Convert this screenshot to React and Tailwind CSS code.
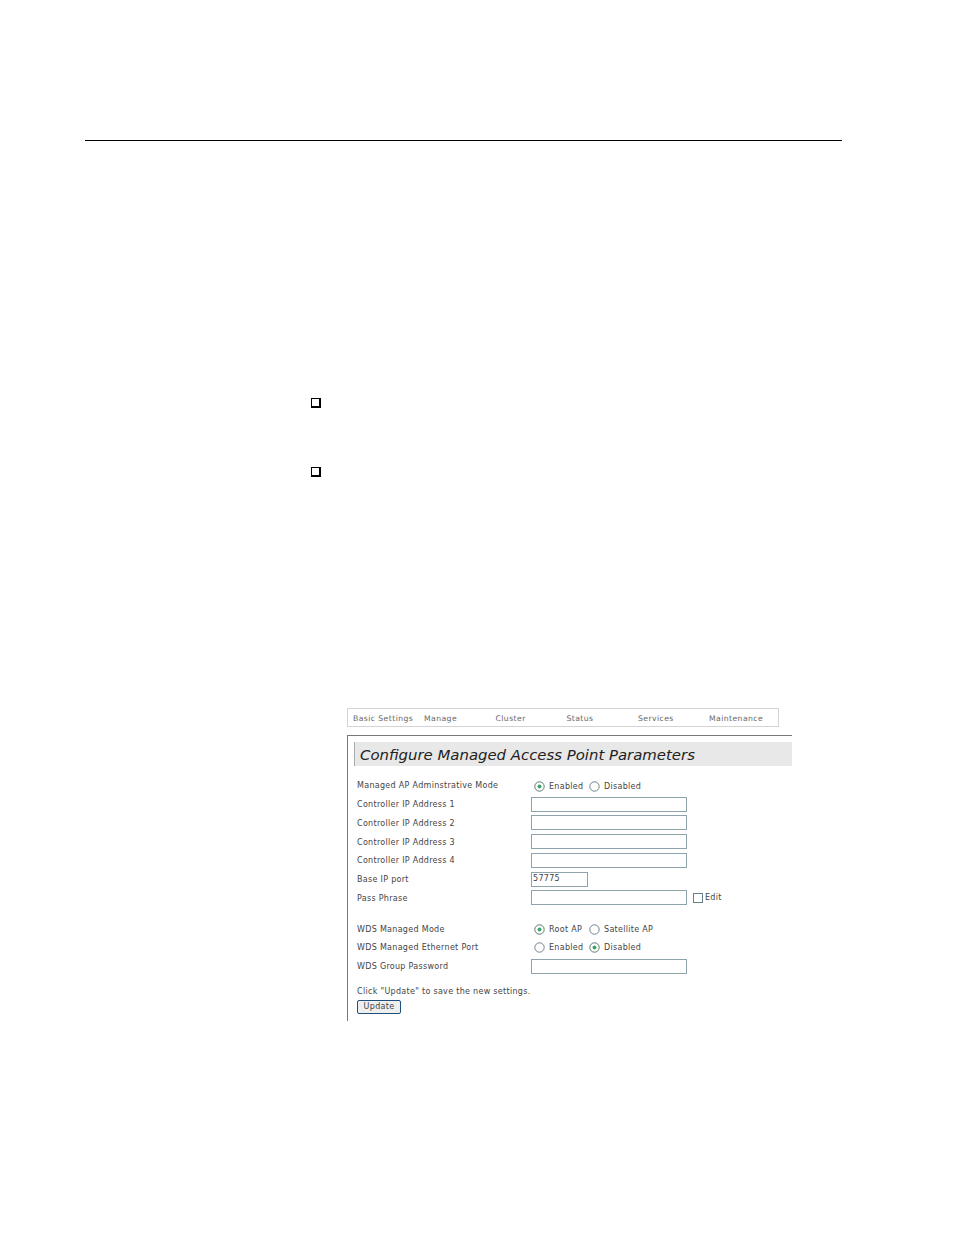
const Field = ({ w = "w-[156px]", value = "" }) => (
  <div className={`${w} h-[15px] border border-[#8fa3ad] bg-white text-[8px] leading-[12px] pl-[1px] text-[#444] tracking-[0.3px]`}>{value}</div>
);

const Radio = ({ on }) => (
  <svg width="11" height="11" viewBox="0 0 11 11" className="shrink-0">
    <circle cx="5.5" cy="5.5" r="4.7" fill="#fff" stroke={on ? "#4d6b63" : "#5d7480"} strokeWidth="0.9" />
    {on && <circle cx="5.5" cy="5.5" r="2" fill="#3fa56a" />}
  </svg>
);

const Options = ({ a, b, aOn, pt = "pt-[1px]" }) => (
  <div className={`flex items-center pl-[3px] ${pt} text-[#444]`}>
    <Radio on={aOn} />
    <span className="ml-[4px] pt-[1px] w-[40px] whitespace-nowrap">{a}</span>
    <Radio on={!aOn} />
    <span className="ml-[4px] pt-[1px] whitespace-nowrap">{b}</span>
  </div>
);

const Row = ({ label, children }) => (
  <div className="flex items-center h-[18.75px]">
    <div className="w-[174px] shrink-0 text-[#444] pt-[2px]">{label}</div>
    {children}
  </div>
);

const tabs = [
  ["Basic Settings", "w-[71px]"],
  ["Manage", "w-[71.5px]"],
  ["Cluster", "w-[71px]"],
  ["Status", "w-[71.5px]"],
  ["Services", "w-[71px]"],
  ["Maintenance", "w-[70px]"],
];

const Bullet = ({ className = "" }) => (
  <div className={`w-[10px] h-[10px] border border-r-[2px] border-b-[2px] border-black bg-white ${className}`} />
);

export default function App() {
  return (
    <div className="w-[954px] h-[1235px] bg-white overflow-hidden pt-[140px] font-['DejaVu_Sans',sans-serif]">
      <div className="ml-[85px] w-[757px] h-px bg-black" />
      <div className="ml-[311px] pt-[257px]">
        <Bullet />
        <Bullet className="mt-[59px]" />
      </div>

      <div className="ml-[347px] mt-[231px] w-[445px] text-[8px] tracking-[0.3px]">
        <div className="w-[432px] h-[19px] border border-[#d4d4d4] flex items-center pl-[5px] pt-[3px] text-[7.7px] tracking-[0.42px] text-[#666]">
          {tabs.map(([t, w]) => (
            <div key={t} className={`${w} shrink-0 whitespace-nowrap`}>{t}</div>
          ))}
        </div>

        <div className="mt-[8px] h-[286px] border-t border-l border-[#777] pt-[6px] pl-[6px]">
          <div className="h-[24px] bg-[#e8e8e8] border-l border-[#aaa] pl-[5px] pt-[3px] flex items-center text-[14.9px] tracking-normal italic text-[#222]">
            Configure Managed Access Point Parameters
          </div>

          <div className="pl-[3px] mt-[10px]">
            <Row label="Managed AP Adminstrative Mode">
              <Options a="Enabled" b="Disabled" aOn pt="pt-[3px]" />
            </Row>
            <Row label="Controller IP Address 1"><Field /></Row>
            <Row label="Controller IP Address 2"><Field /></Row>
            <Row label="Controller IP Address 3"><Field /></Row>
            <Row label="Controller IP Address 4"><Field /></Row>
            <Row label="Base IP port"><Field w="w-[57px]" value="57775" /></Row>
            <Row label="Pass Phrase">
              <Field />
              <div className="ml-[6px] w-[10px] h-[10px] border border-[#6b7f8a] bg-white" />
              <span className="ml-[2px] text-[#444]">Edit</span>
            </Row>
            <div className="h-[12px]" />
            <Row label="WDS Managed Mode"><Options a="Root AP" b="Satellite AP" aOn /></Row>
            <Row label="WDS Managed Ethernet Port"><Options a="Enabled" b="Disabled" aOn={false} /></Row>
            <Row label="WDS Group Password"><Field /></Row>
            <div className="mt-[10px] h-[11px] leading-[11px] text-[#444]">Click "Update" to save the new settings.</div>
            <button className="mt-[3px] block w-[44px] h-[14px] rounded-[2px] border border-[#1f4f7a] bg-[#eef0f0] text-[#444] text-[8px] leading-[11px] tracking-[0.3px]">Update</button>
          </div>
        </div>
      </div>
    </div>
  );
}
